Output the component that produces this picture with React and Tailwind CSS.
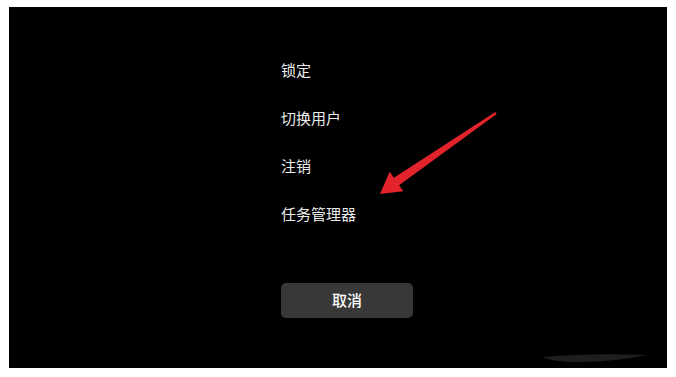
import React from 'react';

const menuItems = ['锁定', '切换用户', '注销', '任务管理器'];

// red annotation arrow + faint smear, drawn over the black screen
const Overlay = () => (
  <svg
    className="absolute inset-0 pointer-events-none"
    width="658"
    height="361"
    viewBox="0 0 658 361"
  >
    <polygon
      points="486.3,105 384.9,170.8 380.6,164.7 371,187 394.4,184.3 390.1,178.2 487.7,107"
      fill="#e3232b"
    />
    <path d="M534 350 Q580 346 638 348 Q600 356 560 355 Q540 354 534 350 Z" fill="#1e1e1e" />
  </svg>
);

const App = () => {
  return (
    <div
      className="w-[676px] h-[377px] bg-white pl-[9px] pt-[7px]"
      style={{ fontFamily: '"Noto Sans CJK SC", "Noto Sans", sans-serif' }}
    >
      <div className="relative w-[658px] h-[361px] bg-black flex flex-col">
        <div className="ml-[272px] mt-[39px] flex flex-col">
          {menuItems.map((item) => (
            <div key={item} className="h-[48px] flex items-center text-[15px] text-[#ececec]">
              {item}
            </div>
          ))}
          <button className="mt-[45px] w-[132px] h-[35px] rounded-[5px] bg-[#383838] text-[15px] font-medium text-white flex items-center justify-center">
            取消
          </button>
        </div>
        <Overlay />
      </div>
    </div>
  );
};

export default App;
